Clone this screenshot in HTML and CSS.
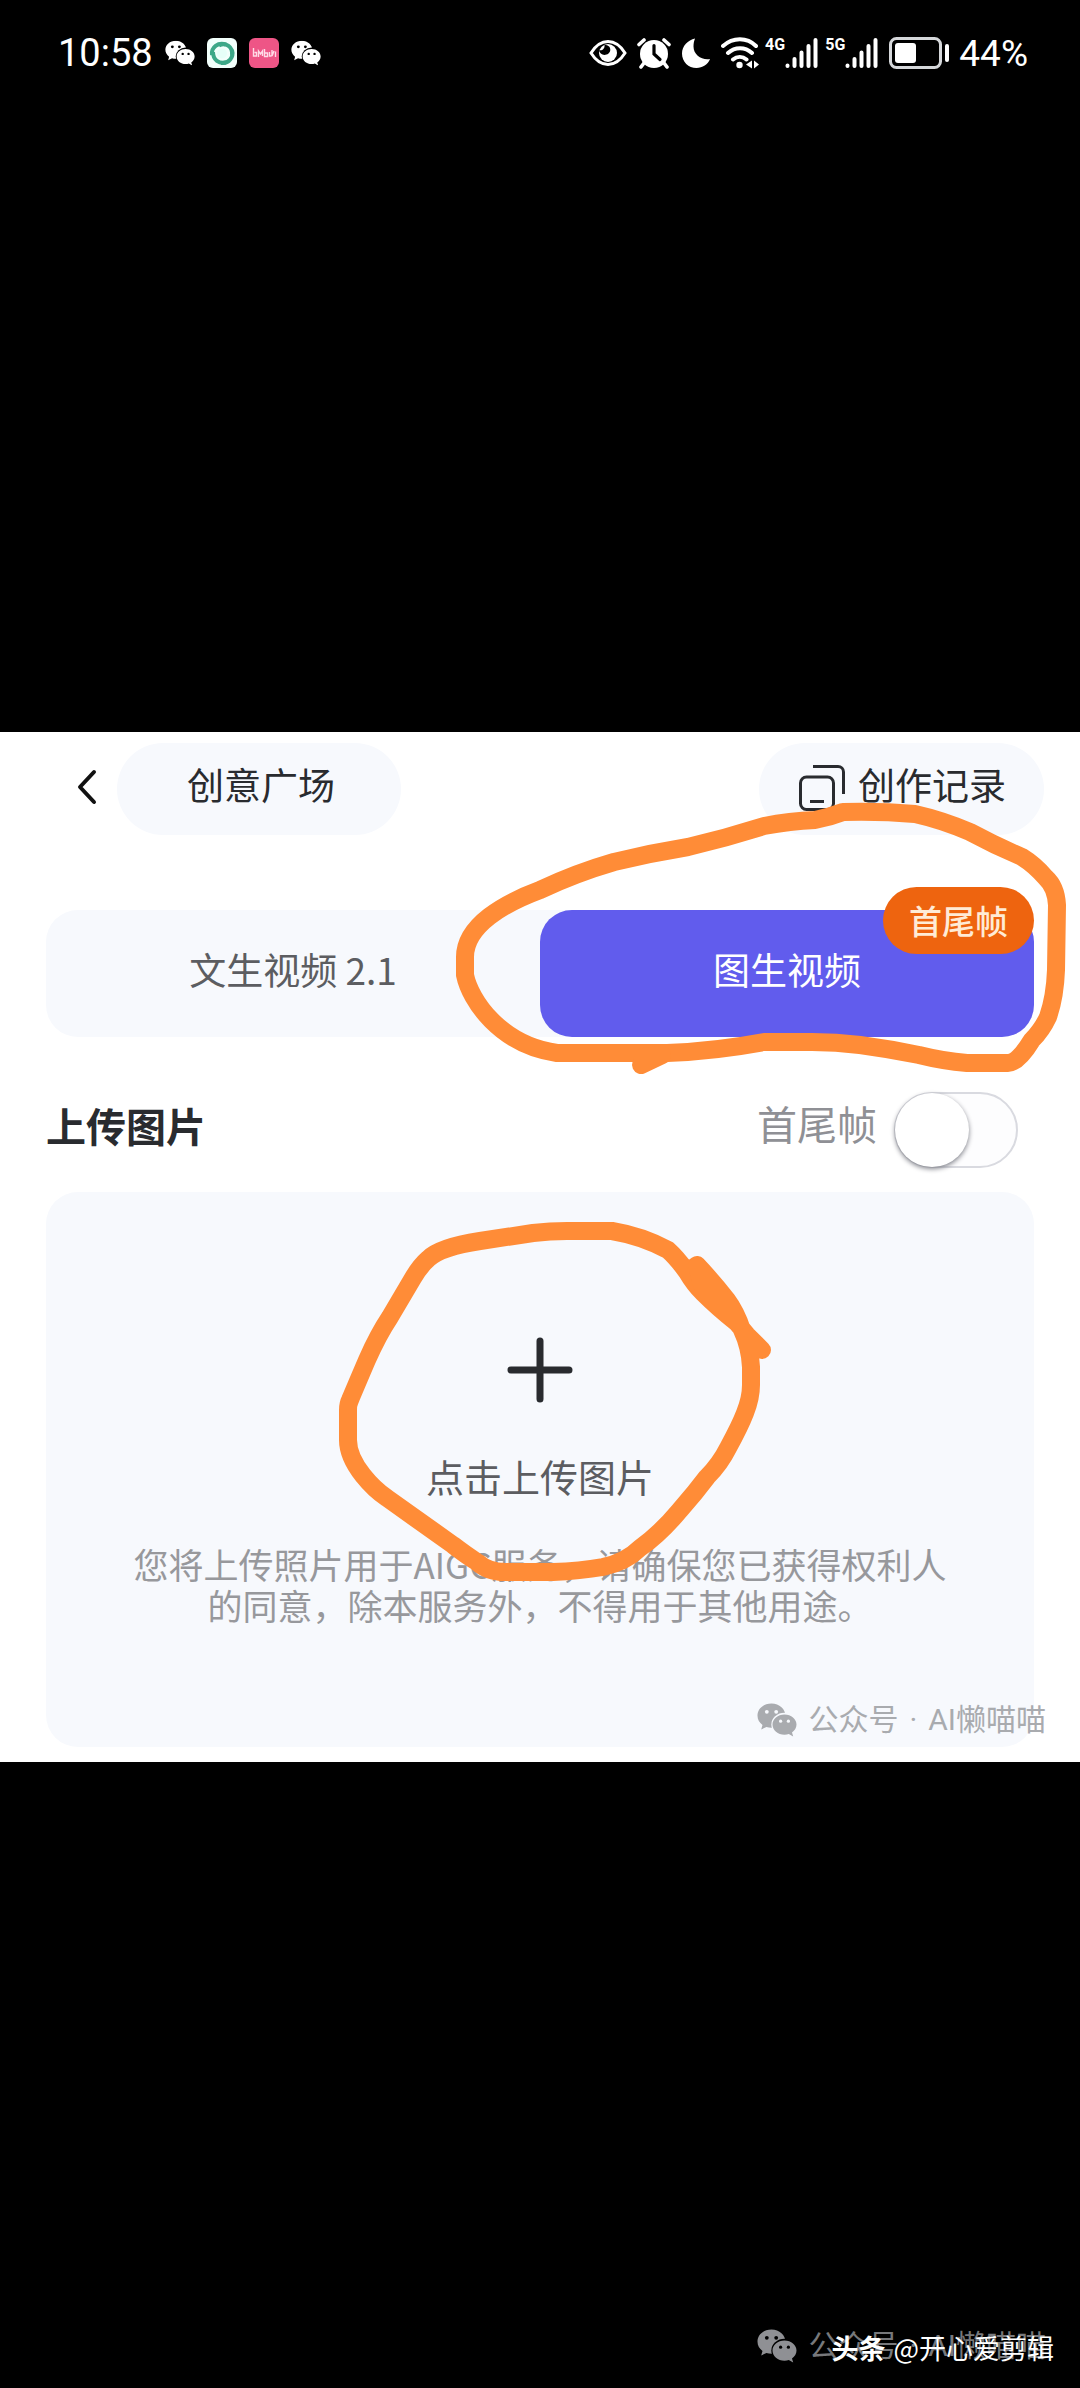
FILE: index.html
```html
<!DOCTYPE html>
<html lang="zh-CN">
<head>
<meta charset="utf-8">
<meta name="viewport" content="width=device-width, initial-scale=1">
<title>图生视频</title>
<link rel="stylesheet" href="styles.css">
</head>
<body>
<svg class="defs" aria-hidden="true">
  <defs>
    <mask id="chat-cut" maskUnits="userSpaceOnUse" x="0" y="0" width="40" height="34">
      <rect width="40" height="34" fill="#fff"/>
      <ellipse cx="27.5" cy="21.5" rx="13.2" ry="11.7" fill="#000"/>
      <circle cx="9.8" cy="8.8" r="1.9" fill="#000"/>
      <circle cx="19.2" cy="8.8" r="1.9" fill="#000"/>
    </mask>
    <mask id="chat-eyes" maskUnits="userSpaceOnUse" x="0" y="0" width="40" height="34">
      <rect width="40" height="34" fill="#fff"/>
      <circle cx="23.6" cy="18.2" r="1.6" fill="#000"/>
      <circle cx="31.4" cy="18.2" r="1.6" fill="#000"/>
    </mask>
    <symbol id="chat" viewBox="0 0 40 34">
      <path mask="url(#chat-cut)" d="M14.5 0.5C6.500 .5 .5 5.900 .5 12.800c0 3.700 1.900 7 5 9.200L4.200 26.500l5.200-2.500c1.600.5 3.300.7 5.100.7 8 0 14-5.400 14-11.900S22.500.5 14.500.5z"/>
      <path mask="url(#chat-eyes)" d="M27.500 11.500c-6.700 0-12 4.500-12 10.100s5.300 10.200 12 10.200c1.600 0 3-.2 4.300-.7l4.400 2.400-1.200-4c2.800-1.900 4.500-4.700 4.500-7.900 0-5.600-5.300-10.100-12-10.100z"/>
    </symbol>
    <symbol id="signal" viewBox="0 0 34 32">
      <path d="M2.500 28.500v.5M9.500 22v7M16.500 15.500V29M23.500 9v20M30.500 3v26" fill="none" stroke="currentColor" stroke-width="4" stroke-linecap="round"/>
    </symbol>
  </defs>
</svg>

<header class="status">
  <div class="status-group">
    <span class="clock">10:58</span>
    <svg class="note" viewBox="0 0 40 34"><use href="#chat"/></svg>
    <svg class="note" viewBox="0 0 30 30">
      <rect width="30" height="30" rx="6" fill="#f2fffb"/>
      <g fill="none" stroke="#3da888" stroke-width="4">
        <path d="M5 17C4 9 11 4 19 6.500"/>
        <path d="M12 7.500C19 4 26 9 25 17"/>
        <path d="M25 12C27 19 22 26 14 25"/>
        <path d="M19 24.500C12 26 6 22 6 14"/>
      </g>
      <circle cx="15" cy="15.500" r="5" fill="#e6fff8"/>
    </svg>
    <svg class="note" viewBox="0 0 30 30">
      <rect width="30" height="30" rx="6" fill="#ee5586"/>
      <path d="M4.500 10v8h3v-3.500h-2M9.500 19v-6l2 3 2-3v5M15.500 11v7.500h3V15h-2.500M20.500 14v4h2M23 12v6l2-5M26.500 13.500V19" fill="none" stroke="#ffdbe7" stroke-width="1.400"/>
    </svg>
    <svg class="note" viewBox="0 0 40 34"><use href="#chat"/></svg>
  </div>
  <div class="status-group status-right">
    <svg width="38" height="32" viewBox="0 0 38 32">
      <path d="M2 16C7 8 12.500 4.500 19 4.500S31 8 36 16c-5 8-10.500 11.500-17 11.500S7 24 2 16z" fill="none" stroke="currentColor" stroke-width="3"/>
      <circle cx="19" cy="16" r="9" fill="currentColor"/>
      <path d="M10 13c3 1 6-1 5.500-5 5-1 8 5 4 8.500-4 3-9 1-9.500-3.500z" fill="#000"/>
    </svg>
    <svg width="34" height="32" viewBox="0 0 34 32">
      <circle cx="17" cy="17" r="14" fill="currentColor"/>
      <path d="M2 7.500l5-4.500M32 7.500L27 3M7 26l-3 4M27 26l3 4" stroke="currentColor" stroke-width="3.600" stroke-linecap="round"/>
      <path d="M17 8.500V17l6 5.500" fill="none" stroke="#000" stroke-width="3.200" stroke-linecap="round"/>
    </svg>
    <svg width="30" height="32" viewBox="0 0 30 32">
      <path d="M14 1.500C7 3 1 9 1 16.500 1 25 7.500 31 15.500 31c6 0 11.500-3.500 13.500-9-8 1.500-16.500-4-16.500-12.500 0-3 .5-5.500 1.500-8z" fill="currentColor"/>
    </svg>
    <svg width="38" height="32" viewBox="0 0 38 32">
      <path d="M2 9c10-9 24-9 33 0M7 16c7-6.500 17-6.500 24 0M12 22.500c4-3.500 9.500-3.500 13.500 0" fill="none" stroke="currentColor" stroke-width="4" stroke-linecap="round"/>
      <circle cx="18.500" cy="28" r="3.200" fill="currentColor"/>
      <path d="M25 27.500l6-4v8zM38 27.500l-5-4v8z" fill="currentColor"/>
    </svg>
    <span class="net"><span class="gen">4G</span><svg class="bars"><use href="#signal"/></svg></span>
    <span class="net"><span class="gen">5G</span><svg class="bars"><use href="#signal"/></svg></span>
    <svg width="60" height="32" viewBox="0 0 60 32">
      <rect x="1.500" y="1.500" width="50" height="29" rx="6" fill="none" stroke="#d5d7da" stroke-width="3"/>
      <rect x="6" y="6" width="21" height="20" rx="3" fill="currentColor"/>
      <rect x="56" y="7" width="4" height="18" rx="2" fill="currentColor"/>
    </svg>
    <span class="percent">44%</span>
  </div>
</header>

<main class="panel">
  <nav class="topbar">
    <button class="back" type="button" aria-label="返回">
      <svg width="20" height="36" viewBox="0 0 20 36"><path d="M17 3L3 18l14 15" fill="none" stroke="currentColor" stroke-width="4" stroke-linecap="round" stroke-linejoin="round"/></svg>
    </button>
    <button class="pill" type="button">创意广场</button>
    <button class="pill pill-history" type="button">
      <svg width="46" height="46" viewBox="0 0 46 46"><path d="M14 1.500h25a5.500 5.500 0 0 1 5.500 5.500v22" fill="none" stroke="currentColor" stroke-width="3"/><rect x="1.500" y="12" width="33" height="32.500" rx="6" fill="none" stroke="currentColor" stroke-width="3"/><path d="M11 36.500h14" stroke="currentColor" stroke-width="3"/></svg>
      <span>创作记录</span>
    </button>
  </nav>

  <div class="tabs">
    <button class="tab" type="button">文生视频 2.1</button>
    <button class="tab tab-active" type="button">图生视频<span class="badge">首尾帧</span></button>
  </div>

  <div class="section-head">
    <h1>上传图片</h1>
    <label class="toggle"><span class="toggle-text">首尾帧</span><input class="switch" type="checkbox"></label>
  </div>

  <section class="upload">
    <button class="add" type="button">
      <svg width="66" height="66" viewBox="0 0 66 66"><path d="M33 4v58M4 33h58" stroke="#292b2f" stroke-width="7" stroke-linecap="round"/></svg>
      点击上传图片
    </button>
    <p class="terms">您将上传照片用于AIGC服务，请确保您已获得权利人<br>的同意，除本服务外，不得用于其他用途。</p>
  </section>

  <div class="watermark"><svg class="wm-icon"><use href="#chat"/></svg><span>公众号</span><span>·</span><span>AI懒喵喵</span></div>

  <svg class="marks" viewBox="0 0 1080 1030" aria-hidden="true">
    <g transform="translate(0 -732)" fill="none" stroke="#ff8c37" stroke-width="18" stroke-linecap="round" stroke-linejoin="round">
      <path d="M540 890Q576 873 614 862Q651 853 688 847Q726 838 764 826Q790 821 815 820Q830 817 843 812Q880 811 915 814Q942 820 970 832Q996 846 1022 857Q1035 865 1046 878Q1056 887 1057 905L1056 970Q1055 997 1048 1017Q1042 1030 1032 1040Q1018 1063 1008 1063L967 1063Q943 1061 919 1055Q890 1049 860 1045Q836 1042 812 1042L764 1042Q716 1051 667 1053L557 1053C500 1045 470 1000 465 975L465 957C465 925 505 903 540 890Z"/>
      <path d="M641 1065L644 1057L662 1055Z" fill="#ff8c37"/>
      <path d="M762 1350L747 1335L737 1323Q718 1308 703 1293Q694 1284 687 1272Q677 1258 668 1250Q642 1236 612 1231L567 1231Q550 1231 533 1233L480 1241Q440 1247 428 1259Q420 1266 413 1278L390 1317Q378 1335 367 1360Q355 1388 350 1400Q348 1404 348 1410L348 1440C348 1465 375 1490 387 1498L453 1545Q466 1555 477 1562Q488 1572 505 1572L553 1572Q580 1571 603 1567Q626 1562 640 1548Q660 1534 680 1510Q695 1493 707 1477Q720 1464 728 1448Q740 1426 745 1413Q751 1398 751 1385L751 1367Q750 1347 742 1330Q736 1312 727 1300Q714 1283 697 1265L690 1270"/>
      <path d="M697 1266L725 1303L737 1322L704 1292Z" fill="#ff8c37"/>
    </g>
  </svg>
</main>

<footer class="credits">
  <div class="watermark watermark-dark"><svg class="wm-icon"><use href="#chat"/></svg><span>公众号</span><span>·</span><span>AI懒喵喵</span></div>
  <div class="author"><b>头条</b><span>@开心爱剪辑</span></div>
</footer>
</body>
</html>
```
FILE: styles.css
```css
* {
  box-sizing: border-box;
}

body {
  margin: 0;
  min-height: 100vh;
  display: flex;
  flex-direction: column;
  background: #000;
  color: #292b2f;
  font-family: "Noto Sans CJK SC", sans-serif;
}

button {
  border: 0;
  padding: 0;
  background: none;
  color: inherit;
  font: inherit;
}

svg {
  display: block;
  flex: none;
}

.defs {
  position: absolute;
  width: 0;
  height: 0;
}

/* Status bar */
.status {
  display: flex;
  justify-content: space-between;
  padding: 32px 52px 0 58px;
  color: #fff;
  fill: #fff;
  font-family: Roboto, sans-serif;
}

.status-group {
  display: flex;
  align-items: center;
  gap: 12px;
  height: 42px;
}

.status-right {
  gap: 10px;
}

.clock {
  font-size: 38px;
}

.percent {
  font-size: 37px;
}

.note {
  width: 30px;
  height: 30px;
}

.net {
  display: flex;
  margin-left: -4px;
}

.gen {
  font-family: "Liberation Sans Narrow", Roboto, sans-serif;
  font-size: 16px;
  line-height: 16px;
  font-weight: 700;
}

.bars {
  width: 34px;
  height: 32px;
}

/* App panel */
.panel {
  position: relative;
  margin-top: 658px;
  padding: 11px 46px 15px;
  background: #fff;
}

.topbar {
  display: flex;
  align-items: center;
  margin-right: -10px;
  margin-bottom: 75px;
}

.back {
  width: 71px;
  padding-left: 31px;
  padding-bottom: 5px;
  color: #111;
}

.pill {
  display: flex;
  align-items: center;
  height: 92px;
  padding: 0 66px 10px 70px;
  border-radius: 46px;
  background: #f7f9fd;
  font-size: 37px;
}

.pill-history {
  gap: 13px;
  margin-left: auto;
  padding: 0 38px 10px 40px;
}

.pill-history svg {
  margin-top: 8px;
}

.tabs {
  display: flex;
  border-radius: 32px;
  background: #f7f9fd;
}

.tab {
  position: relative;
  flex: 1;
  height: 127px;
  padding-bottom: 10px;
  border-radius: 32px;
  color: #5c5d61;
  font-size: 37px;
}

.tab-active {
  background: #615ced;
  color: #fff;
}

.badge {
  position: absolute;
  top: -23px;
  right: 0;
  padding: 0 26px;
  border-radius: 34px;
  background: #ee640f;
  color: #ffebd6;
  font-size: 33px;
  font-weight: 500;
  line-height: 67px;
}

.section-head {
  display: flex;
  align-items: center;
  justify-content: space-between;
  height: 155px;
  padding: 31px 16px 0 0;
}

h1 {
  margin: 0;
  padding-bottom: 10px;
  font-size: 40px;
  font-weight: 700;
}

.toggle {
  display: flex;
  align-items: center;
  gap: 17px;
  color: #8f9095;
  font-size: 40px;
  line-height: 64px;
}

.toggle-text {
  padding-bottom: 14px;
}

.switch {
  appearance: none;
  width: 124px;
  height: 76px;
  margin: 0;
  border: 2px solid #d9dae0;
  border-radius: 38px;
  background: #fdfdfe;
}

.switch::before {
  content: "";
  display: block;
  width: 74px;
  height: 74px;
  margin: -1px;
  border-radius: 50%;
  background: #fff;
  box-shadow: 0 2px 5px #80828a;
}

.switch:checked::before {
  margin-left: auto;
}

.upload {
  padding: 145px 40px 122px;
  border-radius: 32px;
  background: #f7f9fd;
  text-align: center;
}

.add {
  display: flex;
  flex-direction: column;
  align-items: center;
  gap: 49px;
  margin: 0 auto 43px;
  color: #5c5d61;
  font-size: 38px;
  line-height: 48px;
}

.terms {
  margin: 0;
  color: #97989c;
  font-size: 35px;
  line-height: 41px;
}

.watermark {
  position: absolute;
  right: 34px;
  bottom: 22px;
  display: flex;
  align-items: center;
  gap: 11px;
  color: #a9abaf;
  fill: #a9abaf;
  font-family: Roboto, "Noto Sans CJK SC", sans-serif;
  font-size: 30px;
  line-height: 40px;
}

.wm-icon {
  width: 40px;
  height: 34px;
}

.marks {
  position: absolute;
  top: 0;
  left: 0;
  width: 100%;
  pointer-events: none;
}

/* Credits */
.credits {
  position: relative;
  display: flex;
  justify-content: flex-end;
  margin-top: auto;
  padding: 0 26px 20px;
}

.watermark-dark {
  color: #77787b;
  fill: #8f9094;
}

.author {
  position: relative;
  display: flex;
  align-items: center;
  gap: 8px;
  color: #fff;
  font-size: 27px;
  line-height: 40px;
}
```
